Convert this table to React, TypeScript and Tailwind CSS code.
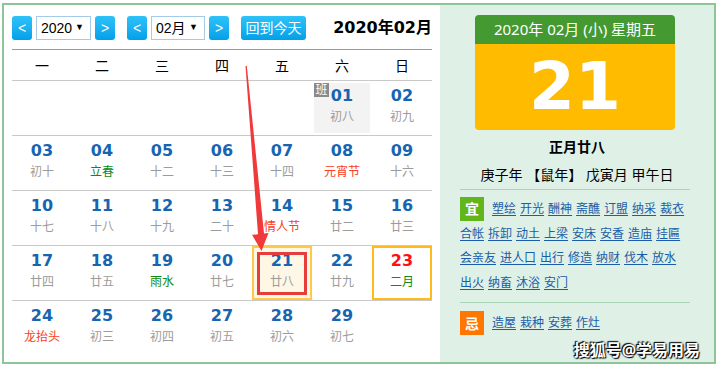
import React from "react";

type Day = {
  day: string;
  lunar: string;
  tone?: "term" | "fest";
  work?: boolean;
  today?: boolean;
  sunday?: boolean;
};

const weekdays = ["一", "二", "三", "四", "五", "六", "日"];

const weeks: (Day | null)[][] = [
  [null, null, null, null, null, { day: "01", lunar: "初八", work: true }, { day: "02", lunar: "初九" }],
  [
    { day: "03", lunar: "初十" },
    { day: "04", lunar: "立春", tone: "term" },
    { day: "05", lunar: "十二" },
    { day: "06", lunar: "十三" },
    { day: "07", lunar: "十四" },
    { day: "08", lunar: "元宵节", tone: "fest" },
    { day: "09", lunar: "十六" },
  ],
  [
    { day: "10", lunar: "十七" },
    { day: "11", lunar: "十八" },
    { day: "12", lunar: "十九" },
    { day: "13", lunar: "二十" },
    { day: "14", lunar: "情人节", tone: "fest" },
    { day: "15", lunar: "廿二" },
    { day: "16", lunar: "廿三" },
  ],
  [
    { day: "17", lunar: "廿四" },
    { day: "18", lunar: "廿五" },
    { day: "19", lunar: "雨水", tone: "term" },
    { day: "20", lunar: "廿七" },
    { day: "21", lunar: "廿八", today: true },
    { day: "22", lunar: "廿九" },
    { day: "23", lunar: "二月", tone: "term", sunday: true },
  ],
  [
    { day: "24", lunar: "龙抬头", tone: "fest" },
    { day: "25", lunar: "初三" },
    { day: "26", lunar: "初四" },
    { day: "27", lunar: "初五" },
    { day: "28", lunar: "初六" },
    { day: "29", lunar: "初七" },
    null,
  ],
];

const yiRows = [
  ["塑绘", "开光", "酬神", "斋醮", "订盟", "纳采", "裁衣"],
  ["合帐", "拆卸", "动土", "上梁", "安床", "安香", "造庙", "挂匾"],
  ["会亲友", "进人口", "出行", "修造", "纳财", "伐木", "放水"],
  ["出火", "纳畜", "沐浴", "安门"],
];
const jiItems = ["造屋", "栽种", "安葬", "作灶"];

const NavButton = ({ label }: { label: string }) => (
  <div className="flex h-[24px] w-[20px] items-center justify-center rounded-[3px] bg-gradient-to-b from-[#2ec2f9] to-[#00a0e9] text-[14px] text-white">
    {label}
  </div>
);

const FakeSelect = ({ value, width }: { value: string; width: string }) => (
  <div
    className={`flex h-[24px] ${width} items-center justify-between border border-[#a4cbe8] bg-white pl-[4px] pr-[6px] text-[14px] text-black`}
  >
    <span>{value}</span>
    <span className="text-[9px]">▼</span>
  </div>
);

const DayCell = ({ cell }: { cell: Day | null }) => {
  if (!cell) return <div />;
  const lunarColor =
    cell.tone === "term" ? "text-[#0d8a17]" : cell.tone === "fest" ? "text-[#f8401f]" : "text-[#9c9c9c]";
  const frame = cell.today
    ? "border-2 border-[#ffc84a] bg-[#fff7e6]"
    : cell.sunday
      ? "border-2 border-[#ffbb1a]"
      : "p-[2px]";
  return (
    <div className={`relative h-full ${frame}`}>
      <div
        className={`relative flex h-full flex-col items-center pt-[3px] ${cell.work ? "bg-[#f3f3f3]" : ""}`}
      >
        {cell.work && (
          <span className="absolute left-0 top-0 flex h-[14px] w-[15px] items-center justify-center bg-[#8a8a8a] text-[12px] leading-none text-white">
            班
          </span>
        )}
        <div
          className={`text-[16px] font-bold leading-[20px] ${cell.sunday ? "text-[#ff1010]" : "text-[#1765b1]"}`}
        >
          {cell.day}
        </div>
        <div className={`text-[12px] leading-[22px] ${lunarColor}`}>{cell.lunar}</div>
      </div>
      {cell.today && (
        <div className="absolute bottom-[3px] left-[3px] right-[3px] top-[4px] border-[3px] border-[#e63c3c]" />
      )}
    </div>
  );
};

const App = () => {
  return (
    <div className="h-[369px] w-[716px] bg-white pl-[2px] pt-[3px] font-['DejaVu_Sans','Noto_Sans_CJK_SC',sans-serif]">
      <div className="relative flex h-[361px] w-[714px] border-2 border-[#8ec49a]">
        {/* calendar */}
        <div className="w-[436px] bg-white px-[8px] pt-[11px]">
          <div className="flex items-center font-['Liberation_Sans','Noto_Sans_CJK_SC',sans-serif]">
            <NavButton label="<" />
            <div className="ml-[4px]">
              <FakeSelect value="2020" width="w-[55px]" />
            </div>
            <div className="ml-[4px]">
              <NavButton label=">" />
            </div>
            <div className="ml-[12px]">
              <NavButton label="<" />
            </div>
            <div className="ml-[4px]">
              <FakeSelect value="02月" width="w-[54px]" />
            </div>
            <div className="ml-[4px]">
              <NavButton label=">" />
            </div>
            <div className="ml-[12px] flex h-[24px] w-[65px] items-center justify-center rounded-[3px] bg-gradient-to-b from-[#2ec2f9] to-[#00a0e9] text-[14px] text-white">
              回到今天
            </div>
            <div className="ml-auto font-['DejaVu_Sans','Noto_Sans_CJK_SC',sans-serif] text-[16px] font-bold text-black">
              2020年02月
            </div>
          </div>
          <div className="mt-[9px] border-b border-[#6aa6dc]" />
          <div className="grid h-[31px] grid-cols-7 items-center border-b border-[#c9c9c9] font-['Noto_Sans_CJK_SC',sans-serif] text-[14px] text-black">
            {weekdays.map((w) => (
              <div key={w} className="text-center">
                {w}
              </div>
            ))}
          </div>
          {weeks.map((week, i) => (
            <div
              key={i}
              className={`grid h-[55px] grid-cols-7 ${i < weeks.length - 1 ? "border-b border-[#c9c9c9]" : ""}`}
            >
              {week.map((cell, j) => (
                <DayCell key={j} cell={cell} />
              ))}
            </div>
          ))}
        </div>

        {/* day detail */}
        <div className="flex flex-1 flex-col bg-[#dff1e6] font-['Noto_Sans','Noto_Sans_CJK_SC',sans-serif]">
          <div className="ml-[35px] mt-[10px] w-[200px]">
            <div className="flex h-[29px] items-center justify-center rounded-t-[4px] bg-[#449a30] text-[15px] text-white">
              2020年 02月 (小) 星期五
            </div>
            <div className="flex h-[86px] items-center justify-center rounded-b-[4px] bg-[#ffbb00] font-['DejaVu_Sans',sans-serif] text-[66px] font-bold leading-none text-white">
              21
            </div>
          </div>
          <div className="mt-[7px] text-center text-[14px] font-bold leading-[20px] text-black">正月廿八</div>
          <div className="mt-[8px] text-center text-[14px] leading-[20px] text-black">
            庚子年 【鼠年】 戊寅月 甲午日
          </div>
          <div className="ml-[20px] mt-[4px] w-[230px] border-t border-[#a9d6b8]" />
          <div className="ml-[20px] mt-[7px] w-[240px] text-[12px] leading-[24.5px]">
            {yiRows.map((row, i) => (
              <div key={i} className="flex items-center">
                {i === 0 && (
                  <span className="mr-[8px] flex h-[24px] w-[24px] items-center justify-center bg-[#62b51a] text-[14px] font-bold text-white">
                    宜
                  </span>
                )}
                {row.map((item) => (
                  <span key={item} className="mr-[4px] text-[#1a5da8] underline underline-offset-2">
                    {item}
                  </span>
                ))}
              </div>
            ))}
          </div>
          <div className="ml-[20px] mt-[7px] w-[230px] border-t border-[#a9d6b8]" />
          <div className="ml-[20px] mt-[8px] flex items-center text-[12px]">
            <span className="mr-[8px] flex h-[24px] w-[24px] items-center justify-center bg-[#ff7700] text-[14px] font-bold text-white">
              忌
            </span>
            {jiItems.map((item) => (
              <span key={item} className="mr-[4px] text-[#1a5da8] underline underline-offset-2">
                {item}
              </span>
            ))}
          </div>
          <div className="mt-[5px] flex justify-end pr-[14px] text-[16px] font-bold leading-[20px] text-white [text-shadow:0_0_2px_#000,1px_1px_1px_#000,-1px_-1px_1px_#000]">
            搜狐号@学易用易
          </div>
        </div>

        {/* annotation arrow */}
        <svg className="pointer-events-none absolute left-[-4px] top-[-5px]" width="716" height="369" viewBox="0 0 716 369">
          <polygon
            points="245.5,66 246.8,66 264,233.5 268.5,233 261.5,251 252,234.8 258,234.3"
            fill="#f0393a"
          />
        </svg>
      </div>
    </div>
  );
};

export default App;
